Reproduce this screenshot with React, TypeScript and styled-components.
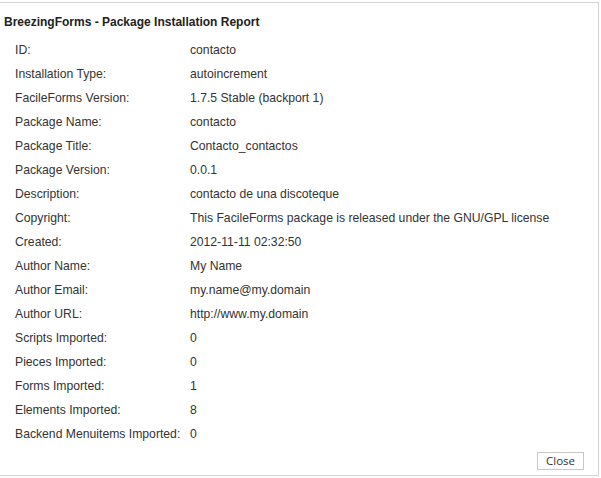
import React from "react";
import styled, { createGlobalStyle } from "styled-components";

const Global = createGlobalStyle`
  html, body { margin: 0; padding: 0; background: #fff; }
  body { font-family: "Liberation Sans", Arial, sans-serif; color: #333; }
`;

const Frame = styled.div`
  box-sizing: border-box;
  margin-top: 2px;
  width: 599px;
  height: 474px;
  border-top: 1px solid #d4d4d4;
  border-right: 1px solid #d4d4d4;
  border-bottom: 1px solid #d4d4d4;
  display: flex;
  flex-direction: column;
`;

const Title = styled.h1`
  margin: 0;
  padding: 12px 0 0 4px;
  font-size: 12px;
  font-weight: bold;
  color: #222;
  line-height: 15px;
`;

const Table = styled.div`
  display: grid;
  grid-template-columns: 175px 1fr;
  grid-auto-rows: 24px;
  padding: 8px 0 0 15px;
  font-size: 12.2px;
  flex: 1;
  align-content: start;
`;

const Cell = styled.div`
  display: flex;
  align-items: center;
  white-space: nowrap;
`;

const Footer = styled.div`
  display: flex;
  justify-content: flex-end;
  padding: 0 14px 5px 0;
`;

const Button = styled.button`
  box-sizing: border-box;
  width: 47px;
  height: 18px;
  padding: 0;
  background: #fff;
  border: 1px solid #c8c8c8;
  border-radius: 0;
  font-family: "Open Sans", "DejaVu Sans", sans-serif;
  font-size: 11.5px;
  color: #333;
  line-height: 16px;
`;

const rows: [string, string][] = [
  ["ID:", "contacto"],
  ["Installation Type:", "autoincrement"],
  ["FacileForms Version:", "1.7.5 Stable (backport 1)"],
  ["Package Name:", "contacto"],
  ["Package Title:", "Contacto_contactos"],
  ["Package Version:", "0.0.1"],
  ["Description:", "contacto de una discoteque"],
  ["Copyright:", "This FacileForms package is released under the GNU/GPL license"],
  ["Created:", "2012-11-11 02:32:50"],
  ["Author Name:", "My Name"],
  ["Author Email:", "my.name@my.domain"],
  ["Author URL:", "http://www.my.domain"],
  ["Scripts Imported:", "0"],
  ["Pieces Imported:", "0"],
  ["Forms Imported:", "1"],
  ["Elements Imported:", "8"],
  ["Backend Menuitems Imported:", "0"],
];

export default function App() {
  return (
    <>
      <Global />
      <Frame>
        <Title>BreezingForms - Package Installation Report</Title>
        <Table>
          {rows.map(([k, v]) => (
            <React.Fragment key={k}>
              <Cell>{k}</Cell>
              <Cell>{v}</Cell>
            </React.Fragment>
          ))}
        </Table>
        <Footer>
          <Button>Close</Button>
        </Footer>
      </Frame>
    </>
  );
}
